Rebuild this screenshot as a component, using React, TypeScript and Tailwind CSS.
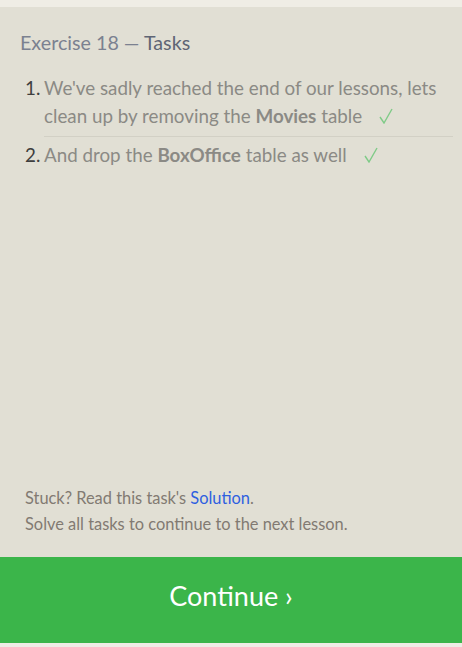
function Check() {
  return (
    <svg className="inline-block ml-[17px] -mt-[4px] align-middle" width="14" height="16" viewBox="0 0 14 16">
      <polyline points="1,9 5,15 13,1" fill="none" stroke="#7fcb87" strokeWidth="1.4" />
    </svg>
  );
}

export default function App() {
  const font = { fontFamily: "Lato, 'Open Sans', sans-serif" };
  return (
    <div className="w-[462px] h-[647px] flex flex-col bg-[#efede5]" style={font}>
      <div className="h-[7px] bg-[#efede5]" />
      <div className="flex-1 flex flex-col bg-[#e1dfd4] pl-5 pr-[9px] pt-[22px]">
        <h2 className="text-[19.7px] leading-7 text-[#7b8190]">
          Exercise 18 — <span className="text-[#5f6574]">Tasks</span>
        </h2>
        <ol className="mt-[17px] text-[18.8px] text-[#8b8a85]">
          <li className="flex pl-[5px]">
            <span className="w-[19px] shrink-0 leading-[28px] text-[#3e3e3e]">1.</span>
            <div className="flex-1 leading-[28px] pb-[6px] border-b border-[#d2d0c5]">
              We've sadly reached the end of our lessons, lets clean up by removing the{" "}
              <b className="font-bold">Movies</b> table
              <Check />
            </div>
          </li>
          <li className="flex pl-[5px] pt-[4px]">
            <span className="w-[19px] shrink-0 leading-[28px] text-[#3e3e3e]">2.</span>
            <div className="flex-1 leading-[28px]">
              And drop the <b className="font-bold">BoxOffice</b> table as well
              <Check />
            </div>
          </li>
        </ol>
        <div className="mt-auto pb-[20px] pl-[5px] text-[16.4px] leading-[26px] text-[#827a72]">
          <p>
            Stuck? Read this task's <a className="text-[#2e5fe0]">Solution</a>.
          </p>
          <p>Solve all tasks to continue to the next lesson.</p>
        </div>
      </div>
      <button className="h-[86px] pb-[8px] bg-[#3bb54a] text-white text-[27px] shrink-0">Continue ›</button>
      <div className="h-[4px] bg-[#efede5]" />
    </div>
  );
}
